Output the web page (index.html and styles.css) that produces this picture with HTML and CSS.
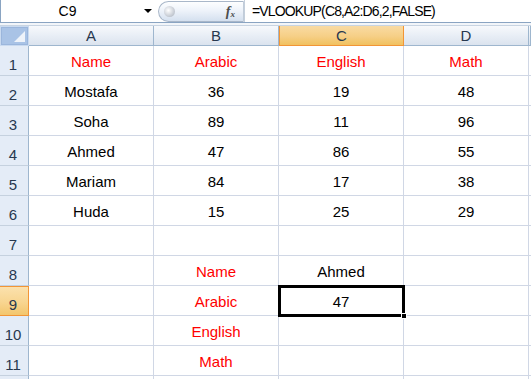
FILE: index.html
```html
<!DOCTYPE html>
<html lang="en">
<head>
  <meta charset="UTF-8" />
  <title>VLOOKUP</title>
  <link rel="stylesheet" href="styles.css">
</head>
<body>
  <div class="formula-bar">
    <div class="name-box">
      <span class="ref">C9</span>
      <span class="arrow"></span>
    </div>
    <div class="pill">
      <span class="knob"></span>
      <span class="fx">f<sub>x</sub></span>
    </div>
    <div class="formula">=VLOOKUP(C8,A2:D6,2,FALSE)</div>
  </div>
  <div class="gap"></div>

  <div class="sheet">
    <!-- header -->
    <div class="corner"><span class="tri"></span></div>
    <div class="col-head">A</div>
    <div class="col-head">B</div>
    <div class="col-head active">C</div>
    <div class="col-head">D</div>
    <div class="col-head edge"></div>

    <div class="row-head">1</div>
    <div class="cell red">Name</div>
    <div class="cell red">Arabic</div>
    <div class="cell red">English</div>
    <div class="cell red">Math</div>
    <div class="cell edge"></div>

    <div class="row-head">2</div>
    <div class="cell">Mostafa</div>
    <div class="cell">36</div>
    <div class="cell">19</div>
    <div class="cell">48</div>
    <div class="cell edge"></div>

    <div class="row-head">3</div>
    <div class="cell">Soha</div>
    <div class="cell">89</div>
    <div class="cell">11</div>
    <div class="cell">96</div>
    <div class="cell edge"></div>

    <div class="row-head">4</div>
    <div class="cell">Ahmed</div>
    <div class="cell">47</div>
    <div class="cell">86</div>
    <div class="cell">55</div>
    <div class="cell edge"></div>

    <div class="row-head">5</div>
    <div class="cell">Mariam</div>
    <div class="cell">84</div>
    <div class="cell">17</div>
    <div class="cell">38</div>
    <div class="cell edge"></div>

    <div class="row-head">6</div>
    <div class="cell">Huda</div>
    <div class="cell">15</div>
    <div class="cell">25</div>
    <div class="cell">29</div>
    <div class="cell edge"></div>

    <div class="row-head">7</div>
    <div class="cell"></div>
    <div class="cell"></div>
    <div class="cell"></div>
    <div class="cell"></div>
    <div class="cell edge"></div>

    <div class="row-head">8</div>
    <div class="cell"></div>
    <div class="cell red">Name</div>
    <div class="cell">Ahmed</div>
    <div class="cell"></div>
    <div class="cell edge"></div>

    <div class="row-head active">9</div>
    <div class="cell"></div>
    <div class="cell red">Arabic</div>
    <div class="cell selected">47<span class="handle"></span></div>
    <div class="cell"></div>
    <div class="cell edge"></div>

    <div class="row-head">10</div>
    <div class="cell"></div>
    <div class="cell red">English</div>
    <div class="cell"></div>
    <div class="cell"></div>
    <div class="cell edge"></div>

    <div class="row-head">11</div>
    <div class="cell"></div>
    <div class="cell red">Math</div>
    <div class="cell"></div>
    <div class="cell"></div>
    <div class="cell edge"></div>

    <!-- row 12, only its top edge shows -->
    <div class="row-head"></div>
    <div class="cell"></div>
    <div class="cell"></div>
    <div class="cell"></div>
    <div class="cell"></div>
    <div class="cell edge"></div>
  </div>
</body>
</html>
```

FILE: styles.css
```css
* { box-sizing: border-box; margin: 0; padding: 0; }

html, body {
  width: 531px;
  height: 379px;
  overflow: hidden;
  background: #fff;
  font-family: "Liberation Sans", Arial, sans-serif;
}

/* formula bar */
.formula-bar {
  display: flex;
  height: 23px;
  border-left: 1px solid #8aa4c2;
  border-bottom: 1px solid #8aa4c2;
  background: #fff;
}

.name-box {
  width: 157px;
  display: flex;
  align-items: center;
}

.name-box .ref {
  flex: 1;
  text-align: center;
  font-size: 14px;
  color: #000;
  padding-left: 4px;
}

.name-box .arrow {
  width: 0;
  height: 0;
  border-left: 4px solid transparent;
  border-right: 4px solid transparent;
  border-top: 4px solid #000;
  margin-left: 14px;
  margin-right: 6px;
}

.pill {
  width: 86px;
  height: 21px;
  margin-top: 1px;
  border: 1px solid #a9b7c9;
  border-right: 1px solid #c1ccd9;
  border-radius: 11px 0 0 11px;
  background: linear-gradient(to bottom, #fdfeff 0%, #eef3fa 45%, #d4e0ef 100%);
  display: flex;
  align-items: center;
  justify-content: space-between;
  padding: 0 8px 0 5px;
}

.knob {
  width: 11px;
  height: 11px;
  border-radius: 50%;
  background: radial-gradient(circle at 40% 40%, #ffffff 0%, #c9ced6 60%, #a5adb8 100%);
}

.fx {
  font-family: "Liberation Serif", "Times New Roman", serif;
  font-style: italic;
  font-weight: bold;
  font-size: 14px;
  color: #4d4d4d;
  line-height: 1;
}

.fx sub {
  font-size: 9px;
  vertical-align: -1px;
}

.formula {
  flex: 1;
  font-size: 14px;
  letter-spacing: -0.85px;
  color: #000;
  padding-left: 7px;
  line-height: 22px;
  border-left: 1px solid #c4cfdc;
}

.gap {
  height: 3px;
  background: #f2f5f9;
  border-bottom: 1px solid #c8d4e2;
}

/* sheet */
.sheet {
  display: grid;
  grid-template-columns: 29px 125px 125px 125px 125px 1fr;
  grid-template-rows: 20px repeat(12, 30px);
  font-size: 15px;
}

.corner {
  background: #a9c3e6;
  border: 1px solid #c9daf0;
  box-shadow: inset 0 0 0 1px #9bb6dc;
  position: relative;
}

.corner .tri {
  position: absolute;
  right: 3px;
  bottom: 3px;
  width: 0;
  height: 0;
  border-left: 11px solid transparent;
  border-bottom: 11px solid #eef3fa;
}

.col-head {
  background: linear-gradient(to bottom, #f7f9fc 0%, #e7edf5 55%, #dbe3ee 100%);
  border-right: 1px solid #9eb6ce;
  border-bottom: 1px solid #9eb6ce;
  color: #27384f;
  text-align: center;
  line-height: 19px;
}

.col-head.active {
  background: linear-gradient(to bottom, #f9dba3 0%, #f6cf86 55%, #f1c15f 100%);
  border: 1px solid #f29536;
  border-top: none;
}

.row-head {
  background: #e4ecf7;
  border-right: 1px solid #9eb6ce;
  border-bottom: 1px solid #c5d1df;
  color: #27384f;
  display: flex;
  align-items: flex-end;
  justify-content: center;
  padding-bottom: 2px;
  padding-right: 2px;
}

.row-head.active {
  background: linear-gradient(to bottom, #fbe1ad 0%, #f8d590 55%, #f3c66d 100%);
  border: 1px solid #f29536;
  border-left: none;
}

.cell {
  border-right: 1px solid #d0d7e5;
  border-bottom: 1px solid #d0d7e5;
  display: flex;
  align-items: center;
  justify-content: center;
  padding-top: 2px;
  color: #000;
  position: relative;
}

.cell.edge {
  border-right: none;
}

.red {
  color: #ff0000;
}

.selected {
  outline: 3px solid #000;
  outline-offset: -2px;
  z-index: 1;
}

.selected .handle {
  position: absolute;
  right: -4px;
  bottom: -4px;
  width: 6px;
  height: 6px;
  background: #000;
  border: 1px solid #fff;
}
```
